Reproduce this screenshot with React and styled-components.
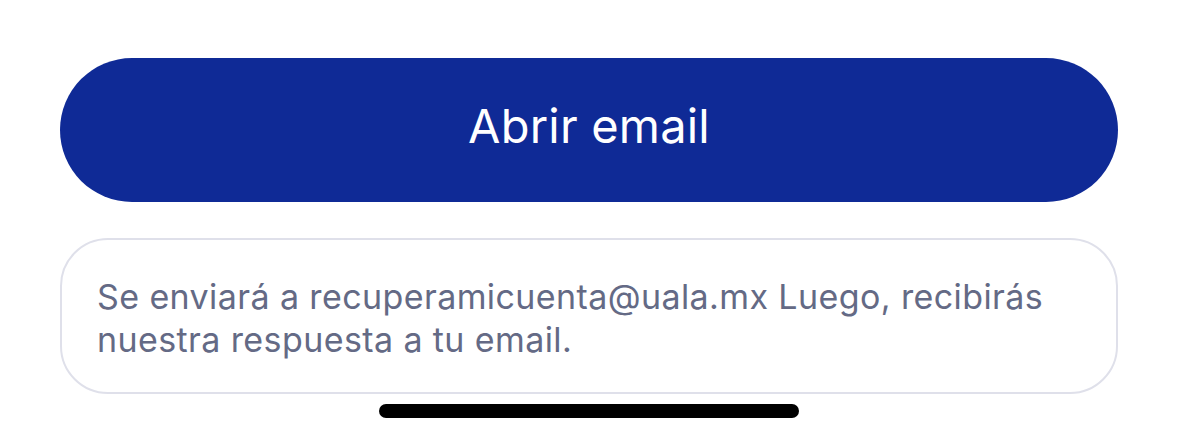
import React from "react";
import styled, { createGlobalStyle } from "styled-components";

const GlobalStyle = createGlobalStyle`
    body {
        margin: 0;
        background: #fff;
        font-family: 'Inter', 'Liberation Sans', sans-serif;
    }
`;

const Screen = styled.div`
    width: 1179px;
    height: 443px;
    display: flex;
    flex-direction: column;
    align-items: center;
    padding: 58px 61px 0 60px;
    box-sizing: border-box;
    overflow: hidden;
`;

const PrimaryButton = styled.button`
    width: 100%;
    height: 144px;
    border: none;
    border-radius: 72px;
    padding: 0 0 9px;
    background-color: #0f2a96;
    color: #fff;
    font-family: 'Inter', 'Liberation Sans', sans-serif;
    font-size: 47px;
    font-weight: 400;
    letter-spacing: 0.2px;
    cursor: pointer;
`;

const InfoCard = styled.div`
    width: 100%;
    margin-top: 36px;
    height: 156px;
    box-sizing: border-box;
    border: 2px solid #dfe0ea;
    border-radius: 48px;
    padding: 35px 30px 0 35px;
`;

const InfoText = styled.p`
    margin: 0;
    font-size: 34px;
    line-height: 43px;
    letter-spacing: 0.4px;
    color: #646a85;
    white-space: nowrap;
`;

const HomeIndicator = styled.div`
    margin-top: 10px;
    width: 420px;
    height: 14px;
    border-radius: 7px;
    background: #000;
`;

export default function App() {
    return (
        <>
            <GlobalStyle />
            <Screen>
                <PrimaryButton>Abrir email</PrimaryButton>
                <InfoCard>
                    <InfoText>
                        Se enviará a recuperamicuenta@uala.mx Luego, recibirás
                        <br />
                        nuestra respuesta a tu email.
                    </InfoText>
                </InfoCard>
                <HomeIndicator />
            </Screen>
        </>
    );
}
